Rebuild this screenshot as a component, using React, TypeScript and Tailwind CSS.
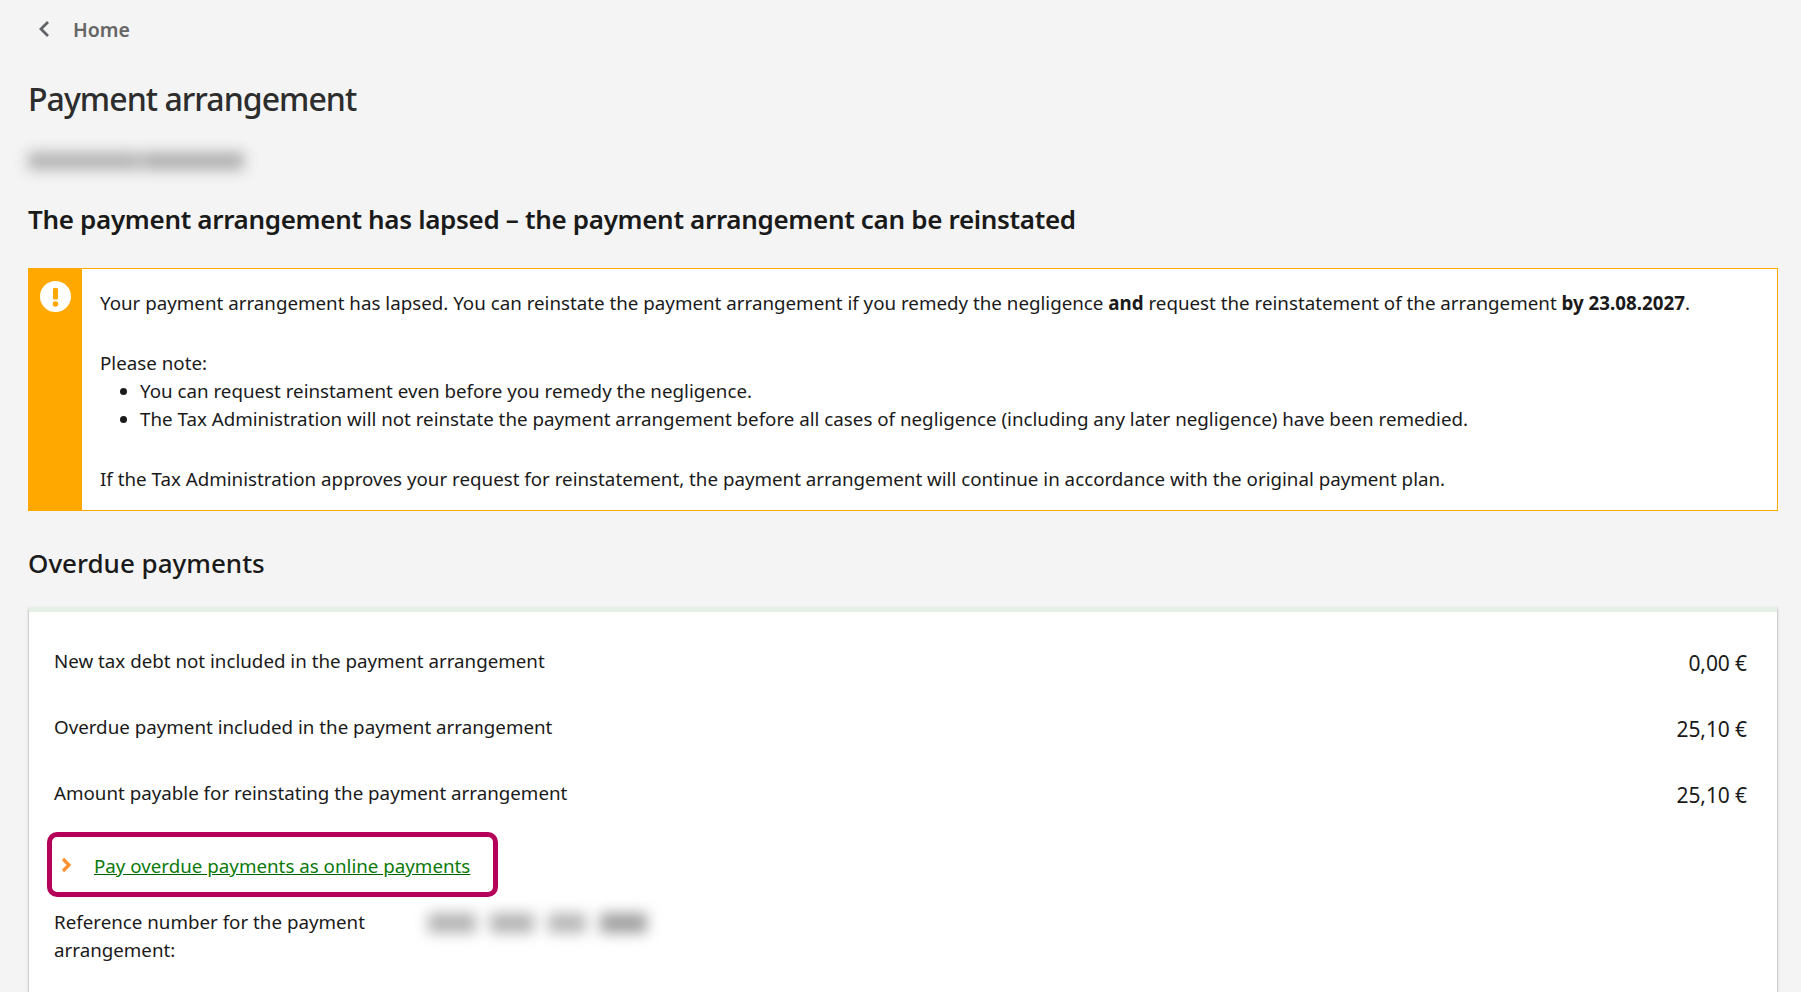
import React from "react";

const Row = ({ label, value }: { label: string; value: string }) => (
  <div className="flex h-[66px] items-center justify-between">
    <span>{label}</span>
    <span className="mr-[1px] mt-[3px] text-[21px] tracking-[-0.1px]">{value}</span>
  </div>
);

export default function App() {
  return (
    <div className="h-[992px] overflow-hidden bg-[#f4f4f4] pl-[28px] pr-[23px] font-['Noto_Sans','Open_Sans',sans-serif] text-[18.75px] leading-[28px] text-[#1a1a1a]">
      <div className="flex h-[60px] items-center pl-[10px] text-[19.5px] font-semibold text-[#666666]">
        <svg width="12" height="18" viewBox="0 0 12 18" fill="none" stroke="#5f6368" strokeWidth="2.8" className="mb-[3px]">
          <path d="M10 2 L3 9 L10 16" />
        </svg>
        <span className="ml-[23px]">Home</span>
      </div>
      <h1 className="mt-[17px] text-[32px] font-medium leading-[44px] tracking-[-0.95px] text-[#2d2d2d]">Payment arrangement</h1>
      <div className="mt-[28px] flex h-[24px] items-center gap-[2px] blur-[7px]">
        <div className="h-[18px] w-[112px] bg-[#b4b4b4]" />
        <div className="h-[18px] w-[102px] bg-[#b0b0b0]" />
      </div>
      <h2 className="mt-[27px] text-[26px] font-semibold leading-[38px] tracking-[-0.32px] text-[#1a1a1a]">
        The payment arrangement has lapsed – the payment arrangement can be reinstated
      </h2>
      <div className="mt-[30px] flex h-[243px] border border-[#ffa800] bg-white">
        <div className="flex w-[53px] shrink-0 justify-center bg-[#ffa800] pt-[12px]">
          <svg width="31" height="31" viewBox="0 0 31 31">
            <circle cx="15.5" cy="15.5" r="15.5" fill="white" />
            <rect x="13" y="7" width="5" height="11.5" rx="1.2" fill="#ffa800" />
            <circle cx="15.5" cy="23" r="2.8" fill="#ffa800" />
          </svg>
        </div>
        <div className="pl-[18px] pt-[20px]">
          <p className="h-[28px]">
            Your payment arrangement has lapsed. You can reinstate the payment arrangement if you remedy the negligence <b className="font-bold">and</b> request the reinstatement of the arrangement <b className="font-bold">by 23.08.2027</b>.
          </p>
          <p className="mt-[32px]">Please note:</p>
          <ul className="list-disc pl-[40px]">
            <li>You can request reinstament even before you remedy the negligence.</li>
            <li>The Tax Administration will not reinstate the payment arrangement before all cases of negligence (including any later negligence) have been remedied.</li>
          </ul>
          <p className="mt-[32px]">If the Tax Administration approves your request for reinstatement, the payment arrangement will continue in accordance with the original payment plan.</p>
        </div>
      </div>
      <h2 className="mt-[33px] text-[26px] font-medium leading-[38px] text-[#1a1a1a]">Overdue payments</h2>
      <div className="mt-[25px] h-[400px] border-x border-t-[5px] border-x-[#d0d0d0] border-t-[#e6efe6] bg-white pl-[25px] pr-[29px] pt-[16px] shadow-sm">
        <Row label="New tax debt not included in the payment arrangement" value="0,00 €" />
        <Row label="Overdue payment included in the payment arrangement" value="25,10 €" />
        <Row label="Amount payable for reinstating the payment arrangement" value="25,10 €" />
        <div className="-ml-[7px] mt-[6px] flex h-[65px] w-[451px] items-center rounded-[10px] border-[5px] border-[#b50059] pl-[9px]">
          <svg width="11" height="16" viewBox="0 0 11 16" fill="none" stroke="#ff8f2e" strokeWidth="3.2" className="shrink-0">
            <path d="M2 2 L8 8 L2 14" />
          </svg>
          <a href="#" className="ml-[22px] mt-[3px] text-[#0a7a0a] underline decoration-[#006400]">Pay overdue payments as online payments</a>
        </div>
        <div className="mt-[11px] flex">
          <p className="w-[320px] shrink-0">Reference number for the payment arrangement:</p>
          <div className="ml-[54px] mt-[5px] flex h-[20px] items-center gap-[14px] blur-[7px]">
            <div className="h-[20px] w-[48px] bg-[#b4b4b4]" />
            <div className="h-[20px] w-[44px] bg-[#b4b4b4]" />
            <div className="h-[20px] w-[38px] bg-[#b8b8b8]" />
            <div className="h-[20px] w-[47px] bg-[#a0a0a0]" />
          </div>
        </div>
      </div>
    </div>
  );
}
